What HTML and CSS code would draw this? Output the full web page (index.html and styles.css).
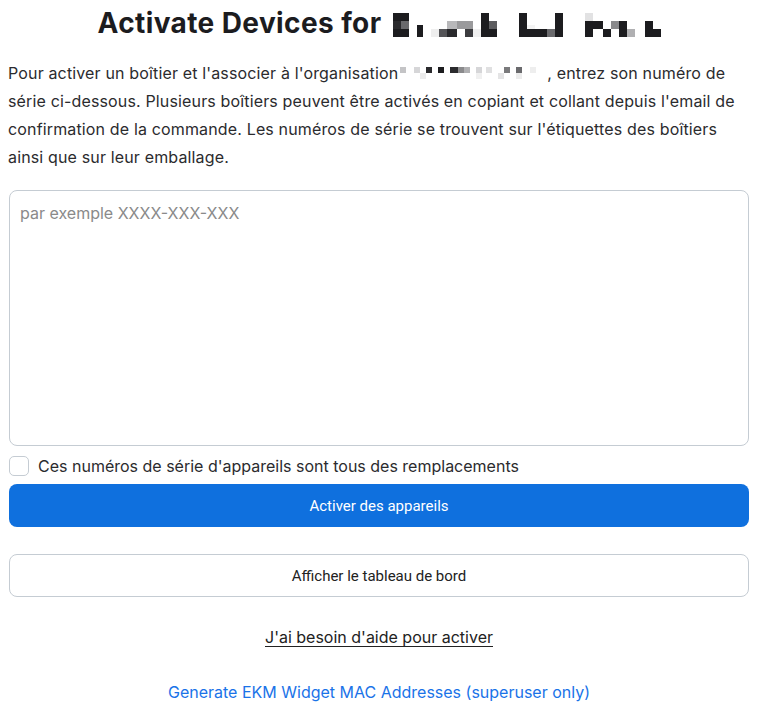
FILE: index.html
```html
<!DOCTYPE html>
<html lang="fr">
<head>
    <meta charset="UTF-8">
    <meta name="viewport" content="width=device-width, initial-scale=1.0">
    <title>Activate Devices</title>
    <link rel="stylesheet" href="styles.css">
</head>
<body>
    <main class="activate">
        <h1 class="activate-title">
            Activate Devices for
            <svg class="redacted redacted-title" width="268" height="24" viewBox="0 0 268 24">
                <!-- blurred org name -->
                <rect x="0" y="0" width="16" height="8" fill="#1c1c1f"/>
                <rect x="0" y="8" width="8" height="8" fill="#2a2a2d"/>
                <rect x="8" y="8" width="8" height="8" fill="#6a6a6d"/>
                <rect x="0" y="16" width="16" height="8" fill="#1c1c1f"/>
                <rect x="24" y="12" width="6" height="12" fill="#1c1c1f"/>
                <rect x="38" y="16" width="8" height="8" fill="#eeeeee"/>
                <rect x="46" y="16" width="8" height="8" fill="#555558"/>
                <rect x="54" y="8" width="10" height="16" fill="#b8b8ba"/>
                <rect x="54" y="16" width="10" height="8" fill="#2a2a2d"/>
                <rect x="64" y="8" width="8" height="8" fill="#9a9a9c"/>
                <rect x="72" y="8" width="8" height="8" fill="#9a9a9c"/>
                <rect x="72" y="16" width="8" height="8" fill="#3c3c3f"/>
                <rect x="80" y="16" width="8" height="8" fill="#f0f0f0"/>
                <rect x="88" y="0" width="8" height="8" fill="#1c1c1f"/>
                <rect x="88" y="8" width="8" height="16" fill="#1c1c1f"/>
                <rect x="96" y="8" width="8" height="8" fill="#5c5c5f"/>
                <rect x="96" y="16" width="8" height="8" fill="#1c1c1f"/>
                <rect x="126" y="0" width="8" height="24" fill="#1c1c1f"/>
                <rect x="134" y="16" width="20" height="8" fill="#1c1c1f"/>
                <rect x="134" y="12" width="8" height="4" fill="#f4f4f4"/>
                <rect x="154" y="16" width="8" height="8" fill="#6a6a6d"/>
                <rect x="162" y="0" width="8" height="24" fill="#1c1c1f"/>
                <rect x="192" y="0" width="8" height="8" fill="#e2e2e3"/>
                <rect x="192" y="8" width="8" height="16" fill="#1c1c1f"/>
                <rect x="200" y="8" width="10" height="8" fill="#1c1c1f"/>
                <rect x="210" y="16" width="8" height="8" fill="#1c1c1f"/>
                <rect x="218" y="8" width="8" height="8" fill="#8a8a8c"/>
                <rect x="226" y="8" width="8" height="16" fill="#1c1c1f"/>
                <rect x="234" y="16" width="8" height="8" fill="#b0b0b2"/>
                <rect x="252" y="8" width="8" height="16" fill="#1c1c1f"/>
                <rect x="260" y="16" width="8" height="8" fill="#1c1c1f"/>
            </svg>
        </h1>

        <p class="activate-intro">
            Pour activer un boîtier et l'associer à l'organisation<svg class="redacted redacted-inline" width="148" height="14" viewBox="0 0 148 14">
                <rect x="2" y="2" width="6" height="6" fill="#c4c4c6"/>
                <rect x="16" y="2" width="6" height="6" fill="#d6d6d8"/>
                <rect x="22" y="8" width="6" height="6" fill="#ececec"/>
                <rect x="28" y="2" width="6" height="6" fill="#2a2a2d"/>
                <rect x="40" y="2" width="6" height="6" fill="#1c1c1f"/>
                <rect x="52" y="2" width="8" height="6" fill="#2a2a2d"/>
                <rect x="60" y="2" width="6" height="6" fill="#8a8a8c"/>
                <rect x="66" y="2" width="6" height="6" fill="#b0b0b2"/>
                <rect x="78" y="2" width="6" height="6" fill="#d6d6d8"/>
                <rect x="78" y="8" width="6" height="6" fill="#f0f0f0"/>
                <rect x="88" y="2" width="6" height="6" fill="#e0e0e1"/>
                <rect x="100" y="8" width="6" height="6" fill="#e4e4e5"/>
                <rect x="106" y="2" width="6" height="6" fill="#7a7a7c"/>
                <rect x="118" y="2" width="6" height="6" fill="#6a6a6d"/>
                <rect x="118" y="8" width="6" height="6" fill="#ececec"/>
                <rect x="132" y="2" width="6" height="6" fill="#eeeeee"/>
            </svg>, entrez son numéro de série ci-dessous. Plusieurs boîtiers peuvent être activés en copiant et collant depuis l'email de confirmation de la commande. Les numéros de série se trouvent sur l'étiquettes des boîtiers ainsi que sur leur emballage.
        </p>

        <textarea class="serial-input" placeholder="par exemple XXXX-XXX-XXX"></textarea>

        <label class="replace-check">
            <input type="checkbox">
            <span class="check-box"></span>
            Ces numéros de série d'appareils sont tous des remplacements
        </label>

        <button class="btn btn-primary">Activer des appareils</button>
        <button class="btn btn-outline">Afficher le tableau de bord</button>

        <a href="#" class="help-link">J'ai besoin d'aide pour activer</a>
        <a href="#" class="admin-link">Generate EKM Widget MAC Addresses (superuser only)</a>
    </main>
</body>
</html>
```

FILE: styles.css
```css
body {
    font-family: Inter, 'Liberation Sans', Arial, sans-serif;
    margin: 0;
    padding: 0;
    background: #fff;
    color: #222;
}
.activate {
    display: flex;
    flex-direction: column;
    padding: 0 9px;
}
.activate-title {
    font-size: 28px;
    font-weight: 700;
    line-height: 34px;
    margin: 0;
    padding-top: 6px;
    text-align: center;
    color: #1c1c1f;
    letter-spacing: 0.4px;
}
.redacted {
    display: inline-block;
}
.redacted-title {
    vertical-align: -4px;
    margin-left: 4px;
}
.redacted-inline {
    vertical-align: 0;
    margin-right: 1px;
}
.activate-intro {
    font-size: 16px;
    line-height: 28px;
    margin: 19px 0 0 -1px;
    color: #2b2b2e;
    letter-spacing: 0.15px;
}
.serial-input {
    margin-top: 19px;
    height: 256px;
    box-sizing: border-box;
    border: 1px solid #c5ccd3;
    border-radius: 8px;
    padding: 12px 10px;
    font-family: inherit;
    font-size: 16px;
    color: #222;
    resize: none;
    outline: none;
}
.serial-input::placeholder {
    color: #8a8a8a;
}
.replace-check {
    display: flex;
    align-items: center;
    gap: 9px;
    margin-top: 10px;
    font-size: 16px;
    line-height: 20px;
    color: #2b2b2e;
}
.replace-check input {
    display: none;
}
.check-box {
    width: 18px;
    height: 18px;
    border: 1px solid #c5ccd3;
    border-radius: 5px;
    background: #fff;
}
.btn {
    height: 43px;
    border-radius: 8px;
    font-family: Roboto, 'Liberation Sans', Arial, sans-serif;
    font-size: 15px;
    cursor: pointer;
}
.btn-primary {
    margin-top: 8px;
    background: #0f70de;
    border: none;
    color: #fff;
}
.btn-outline {
    margin-top: 27px;
    background: #fff;
    border: 1px solid #c5ccd3;
    color: #222;
}
.help-link {
    align-self: center;
    margin-top: 28px;
    font-size: 16px;
    line-height: 24px;
    color: #222;
    text-decoration: underline;
    text-underline-offset: 3px;
}
.admin-link {
    align-self: center;
    margin-top: 31px;
    font-size: 16px;
    line-height: 24px;
    color: #1a73e8;
    text-decoration: none;
}
```
